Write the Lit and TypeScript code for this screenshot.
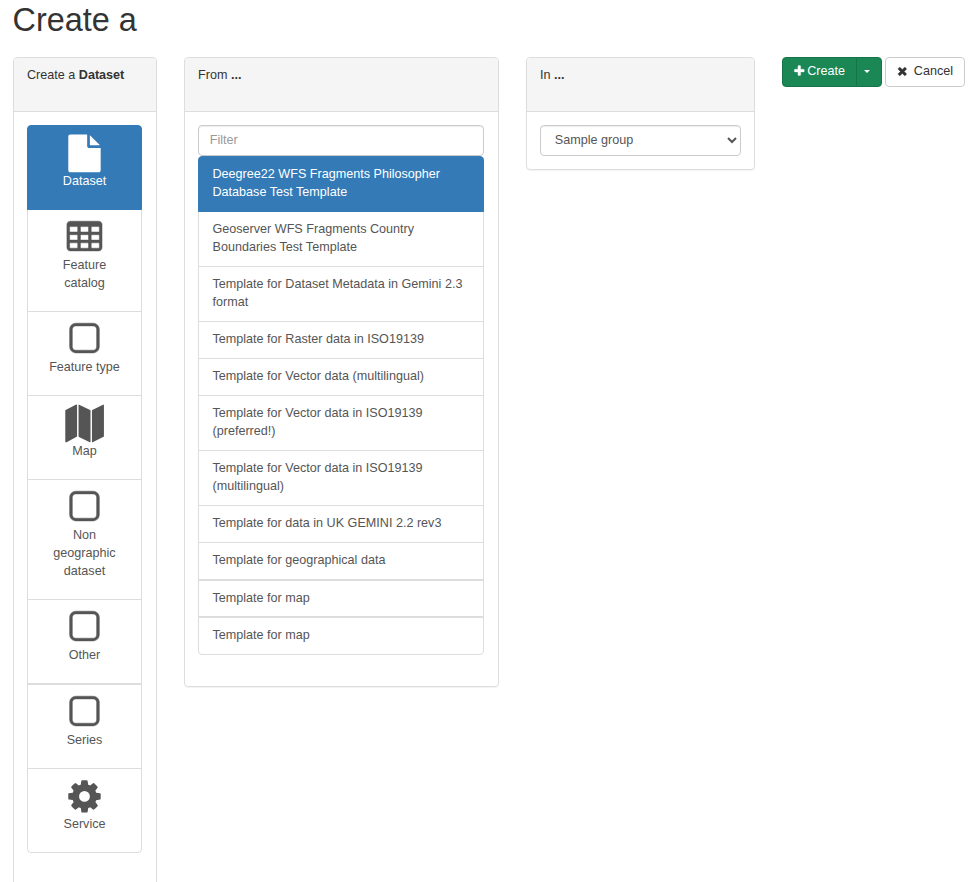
import { LitElement, html, svg, css } from "lit";
import { customElement, state } from "lit/decorators.js";
import { classMap } from "lit/directives/class-map.js";

const ICONS = {
  file: svg`<path d="M1152 512v-472q22 14 36 28l408 408q14 14 28 36h-472zm-128 32q0 40 28 68t68 28h544v1056q0 40-28 68t-68 28h-1344q-40 0-68-28t-28-68v-1600q0-40 28-68t68-28h800v544z"/>`,
  table: svg`<path class="bold" fill-rule="evenodd" d="M224 128h1344q66 0 113 47t47 113v1088q0 66-47 113t-113 47h-1344q-66 0-113-47t-47-113v-1088q0-66 47-113t113-47z
    M224 384q-32 0-32 32v192q0 32 32 32h320q32 0 32-32v-192q0-32-32-32z M736 384q-32 0-32 32v192q0 32 32 32h320q32 0 32-32v-192q0-32-32-32z M1248 384q-32 0-32 32v192q0 32 32 32h320q32 0 32-32v-192q0-32-32-32z
    M224 768q-32 0-32 32v192q0 32 32 32h320q32 0 32-32v-192q0-32-32-32z M736 768q-32 0-32 32v192q0 32 32 32h320q32 0 32-32v-192q0-32-32-32z M1248 768q-32 0-32 32v192q0 32 32 32h320q32 0 32-32v-192q0-32-32-32z
    M224 1152q-32 0-32 32v192q0 32 32 32h320q32 0 32-32v-192q0-32-32-32z M736 1152q-32 0-32 32v192q0 32 32 32h320q32 0 32-32v-192q0-32-32-32z M1248 1152q-32 0-32 32v192q0 32 32 32h320q32 0 32-32v-192q0-32-32-32z"/>`,
  square: svg`<path class="bold" d="M1312 256h-832q-66 0-113 47t-47 113v832q0 66 47 113t113 47h832q66 0 113-47t47-113v-832q0-66-47-113t-113-47zm288 160v832q0 119-84.500 203.500t-203.500 84.500h-832q-119 0-203.500-84.500t-84.500-203.500v-832q0-119 84.500-203.500t203.500-84.500h832q119 0 203.500 84.500t84.500 203.500z"/>`,
  map: svg`<path d="M513 2q32 0 32 32v1472q0 20-17 28l-480 254q-56 16-62-28v-1472q0-20 17-28l480-254q14-4 30-4zM1805 8q13 10 13 26v1472q0 20-17 28l-520 254q-30 0-30-28v-1472q0-20 17-28l508-254q16-4 29 2zM630 2q8 0 14 4l520 256q18 10 18 28v1472q-2 32-32 28l-517-254q-18-8-18-28v-1472q0-34 15-34z"/>`,
  cog: svg`<path d="M1152 896q0-106-75-181t-181-75-181 75-75 181 75 181 181 75 181-75 75-181zm512-109v222q0 12-8 23t-20 13l-185 28q-19 54-39 91 35 50 107 138 10 12 10 25t-9 23q-27 37-99 108t-94 71q-12 0-26-9l-138-108q-44 23-91 38-16 136-29 186-7 28-36 28h-222q-14 0-24.500-8.500t-11.500-21.500l-28-184q-49-16-90-37l-141 107q-10 9-25 9-14 0-25-11-126-114-165-168-7-10-7-23 0-12 8-23 15-21 51-66.500t54-70.500q-27-50-41-99l-183-27q-13-2-21-12.500t-8-23.500v-222q0-12 8-23t19-13l186-28q14-46 39-92-40-57-107-138-10-12-10-24 0-10 9-23 26-36 98.500-107.500t94.500-71.500q13 0 26 10l138 107q44-23 91-38 16-136 29-186 7-28 36-28h222q14 0 24.500 8.500t11.500 21.500l28 184q49 16 90 37l142-107q9-9 24-9 13 0 25 10 129 119 165 170 7 8 7 22 0 12-8 23-15 21-51 66.500t-54 70.500q26 50 41 98l183 28q13 2 21 12.500t8 23.500z"/>`,
  plus: svg`<path d="M1600 736v192q0 40-28 68t-68 28h-416v416q0 40-28 68t-68 28h-192q-40 0-68-28t-28-68v-416h-416q-40 0-68-28t-28-68v-192q0-40 28-68t68-28h416v-416q0-40 28-68t68-28h192q40 0 68 28t28 68v416h416q40 0 68 28t28 68z"/>`,
  times: svg`<path d="M1490 1322q0 40-28 68l-136 136q-28 28-68 28t-68-28l-294-294-294 294q-28 28-68 28t-68-28l-136-136q-28-28-28-68t28-68l294-294-294-294q-28-28-28-68t28-68l136-136q28-28 68-28t68 28l294 294 294-294q28-28 68-28t68 28l136 136q28 28 28 68t-28 68l-294 294 294 294q28 28 28 68z"/>`,
};

const icon = (name: keyof typeof ICONS, size: "large" | "small") =>
  html`<svg
    class="icon ${size}"
    viewBox=${size === "large" ? "20 -24 1792 1792" : "0 40 1792 1792"}
  >${ICONS[name]}</svg>`;

interface ResourceType {
  label: string;
  icon: keyof typeof ICONS;
  split?: boolean;
}

const TYPES: ResourceType[] = [
  { label: "Dataset", icon: "file" },
  { label: "Feature catalog", icon: "table" },
  { label: "Feature type", icon: "square" },
  { label: "Map", icon: "map" },
  { label: "Non geographic dataset", icon: "square" },
  { label: "Other", icon: "square" },
  { label: "Series", icon: "square", split: true },
  { label: "Service", icon: "cog" },
];

const TEMPLATES: { label: string; split?: boolean; tight?: boolean }[] = [
  { label: "Deegree22 WFS Fragments Philosopher Database Test Template" },
  { label: "Geoserver WFS Fragments Country Boundaries Test Template" },
  { label: "Template for Dataset Metadata in Gemini 2.3 format" },
  { label: "Template for Raster data in ISO19139" },
  { label: "Template for Vector data (multilingual)" },
  { label: "Template for Vector data in ISO19139 (preferred!)" },
  { label: "Template for Vector data in ISO19139 (multilingual)" },
  { label: "Template for data in UK GEMINI 2.2 rev3" },
  { label: "Template for geographical data" },
  { label: "Template for map", split: true, tight: true },
  { label: "Template for map", split: true },
];

@customElement("app-root")
export class AppRoot extends LitElement {
  @state() private type = 0;
  @state() private template = 0;

  static styles = css`
    :host {
      display: block;
      height: 882px;
      overflow: hidden;
      background: #fff;
      color: #333;
      font: 12.6px/18px "Liberation Sans", Arial, sans-serif;
    }
    * { box-sizing: border-box; }
    .page { padding: 2px 13px 0; }
    h1 { margin: 0 0 19px -0.4px; font-size: 32.4px; line-height: 36px; font-weight: 400; }
    .columns { display: flex; align-items: flex-start; gap: 27px; }
    .panel {
      flex: none;
      border: 1px solid #ddd;
      border-radius: 4px;
      box-shadow: 0 1px 1px rgba(0, 0, 0, 0.05);
    }
    .types { width: 144px; height: 860px; }
    .templates { width: 315px; height: 630px; }
    .group { width: 229px; }
    .heading {
      height: 54px;
      padding: 8px 13px;
      background: #f5f5f5;
      border-bottom: 1px solid #ddd;
      border-radius: 3px 3px 0 0;
    }
    .body { padding: 13px; }
    .templates .body { padding-right: 14px; }
    .list { display: flex; flex-direction: column; }
    .item {
      border: 1px solid #ddd;
      margin-top: -1px;
      color: #555;
      cursor: pointer;
    }
    .item:first-child { margin-top: 0; border-radius: 4px 4px 0 0; }
    .item:last-child { border-radius: 0 0 4px 4px; }
    .item.split { margin-top: 0; }
    .item.active {
      z-index: 1;
      background: #337ab7;
      border-color: #337ab7;
      color: #fff;
    }
    .types .item {
      display: flex;
      flex-direction: column;
      align-items: center;
      padding: 8px 13px 19px;
      text-align: center;
    }
    .types .list { width: 115px; }
    .templates .item { padding: 8px 13.5px 10px; }
    .templates .item.tight { padding-bottom: 9px; }
    .icon { display: block; flex: none; fill: currentColor; }
    .bold { stroke: currentColor; stroke-width: 24; }
    .large { width: 37.8px; height: 37.8px; margin-bottom: 0.2px; overflow: visible; }
    .small { width: 12.6px; height: 12.6px; stroke: currentColor; stroke-width: 50; }
    input, select {
      display: block;
      width: 100%;
      height: 31px;
      margin: 0;
      border: 1px solid #ccc;
      border-radius: 4px;
      background: #fff;
      color: #555;
      font: inherit;
      box-shadow: inset 0 1px 1px rgba(0, 0, 0, 0.075);
    }
    input { padding: 5px 10.8px 6px; }
    input::placeholder { color: #999; }
    select { padding: 5px 9.8px 6px; }
    .actions { display: flex; gap: 3px; }
    .button-group { display: flex; }
    .button {
      display: flex;
      align-items: center;
      height: 30px;
      padding: 0 0 2px;
      border: 1px solid #ccc;
      border-radius: 4px;
      background: #fff;
      color: #333;
      font: inherit;
      white-space: nowrap;
    }
    .primary { background: #1a8754; border-color: #167548; color: #fff; }
    .create { width: 75px; padding-left: 9.8px; gap: 1.8px; border-radius: 4px 0 0 4px; }
    .toggle { width: 26px; margin-left: -1px; padding-left: 7px; border-radius: 0 4px 4px 0; }
    .cancel { width: 80px; padding-left: 9.8px; gap: 5.4px; }
    .caret {
      margin-top: 1px;
      border: 3px solid transparent;
      border-top-color: #fff;
      border-bottom: 0;
    }
  `;

  render() {
    return html`
      <div class="page">
        <h1>Create a</h1>
        <div class="columns">
          <section class="panel types">
            <div class="heading">Create a <b>${TYPES[this.type].label}</b></div>
            <div class="body">
              <div class="list">
                ${TYPES.map(
                  (t, i) => html`<div
                    class=${classMap({ item: true, active: i === this.type, split: !!t.split })}
                    @click=${() => (this.type = i)}
                  >${icon(t.icon, "large")}<span>${t.label}</span></div>`
                )}
              </div>
            </div>
          </section>
          <section class="panel templates">
            <div class="heading">From <b>...</b></div>
            <div class="body">
              <input type="text" placeholder="Filter" />
              <div class="list">
                ${TEMPLATES.map(
                  (t, i) => html`<div
                    class=${classMap({ item: true, active: i === this.template, split: !!t.split, tight: !!t.tight })}
                    @click=${() => (this.template = i)}
                  >${t.label}</div>`
                )}
              </div>
            </div>
          </section>
          <section class="panel group">
            <div class="heading">In <b>...</b></div>
            <div class="body">
              <select><option>Sample group</option></select>
            </div>
          </section>
          <div class="actions">
            <div class="button-group">
              <button class="button primary create">${icon("plus", "small")}<span>Create</span></button>
              <button class="button primary toggle"><span class="caret"></span></button>
            </div>
            <button class="button cancel">${icon("times", "small")}<span>Cancel</span></button>
          </div>
        </div>
      </div>
    `;
  }
}
